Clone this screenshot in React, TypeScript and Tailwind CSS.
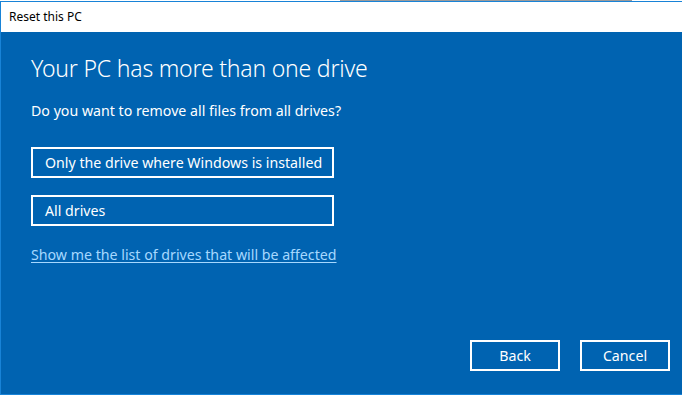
export default function App() {
  const font = { fontFamily: '"Noto Sans", "Open Sans", sans-serif' };
  return (
    <div className="w-[682px] h-[398px] bg-white overflow-hidden flex flex-col" style={font}>
      <div className="h-[1px] bg-[#9a9a9a] ml-[340px] mr-[50px]" />
      <div className="flex flex-col border-t border-l border-b border-[#1883d7]">
        <div className="h-[30px] bg-white flex items-center pl-[8px] text-[12px] text-black">
          Reset this PC
        </div>
        <div className="h-[362px] bg-[#0063b1] text-white flex flex-col pl-[30px] pr-[12px] pt-[19px] pb-[23px]">
          <h1 className="text-[23px] leading-[34px] font-light tracking-[-0.2px] whitespace-nowrap">
            Your PC has more than one drive
          </h1>
          <p className="mt-[16px] text-[14.2px] leading-[20px] whitespace-nowrap">
            Do you want to remove all files from all drives?
          </p>
          <div className="mt-[26px] flex flex-col gap-[17px]">
            <button className="w-[303px] h-[31px] border-2 border-white text-left pl-[12px] text-[14.2px] whitespace-nowrap">
              Only the drive where Windows is installed
            </button>
            <button className="w-[303px] h-[31px] border-2 border-white text-left pl-[12px] text-[14.2px] whitespace-nowrap">
              All drives
            </button>
          </div>
          <a className="mt-[19px] text-[14.2px] leading-[20px] text-[#a6d8ff] underline underline-offset-2 self-start whitespace-nowrap">
            Show me the list of drives that will be affected
          </a>
          <div className="mt-auto flex justify-end gap-[20px]">
            <button className="w-[90px] h-[31px] border-2 border-white text-[14.2px]">Back</button>
            <button className="w-[90px] h-[31px] border-2 border-white text-[14.2px]">Cancel</button>
          </div>
        </div>
      </div>
    </div>
  );
}
